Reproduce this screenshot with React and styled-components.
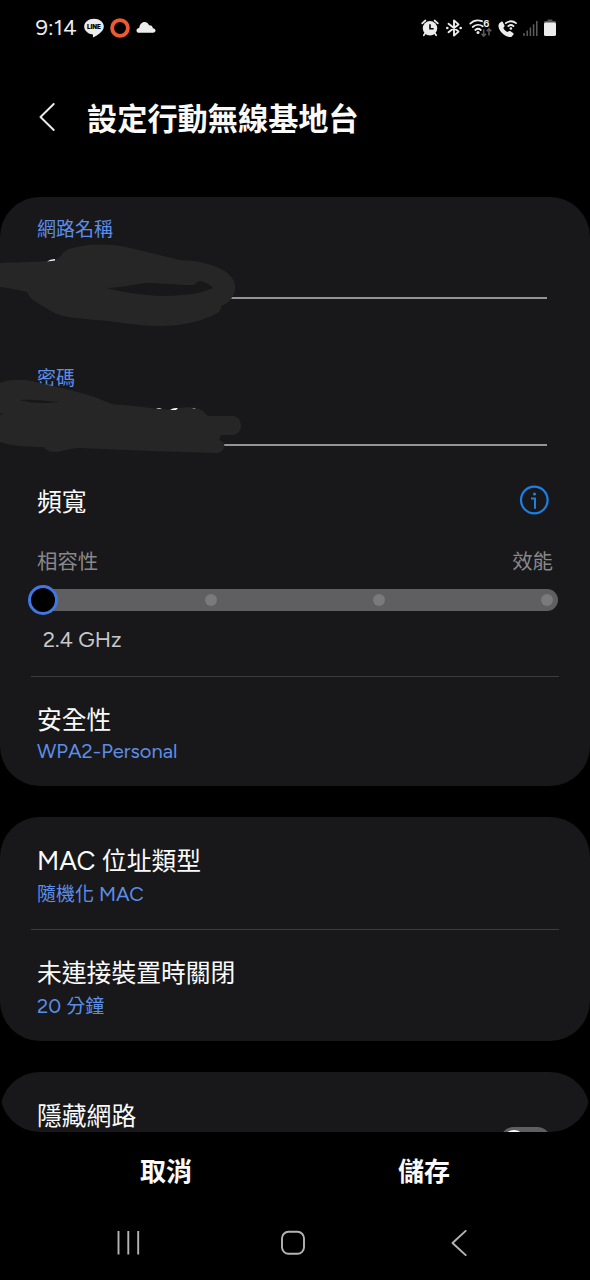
import React, { useState } from 'react';
import styled, { createGlobalStyle } from 'styled-components'

const theme = {
  black: '#000',
  card: '#18181a',
  white: '#fafafa',
  primary: '#5c8ee8',
  grey: '#88888a',
  scribble: '#262626',
}

const GlobalStyle = createGlobalStyle`
  * { box-sizing: border-box; }
  body {
    margin: 0;
    background-color: ${theme.black};
    font-family: Figtree, Inter, 'Noto Sans CJK TC', sans-serif;
    color: ${theme.white};
  }
  button {
    padding: 0;
    border: 0;
    background: none;
    color: inherit;
    font-family: inherit;
  }
  svg { display: block; }
`

const Screen = styled.div`
  display: flex;
  flex-direction: column;
  width: 590px;
  height: 1280px;
  overflow: hidden;
`

const StatusBar = styled.div`
  display: flex;
  align-items: center;
  height: 56px;
  padding: 0 34px 0 35.5px;
`

const Clock = styled.span`
  width: 48.5px;
  font-family: Figtree, Inter, sans-serif;
  font-size: 22px;
  line-height: 26px;
  letter-spacing: 0.1px;
  color: #ececec;
`

const StatusIcons = styled.div`
  display: flex;
  align-items: center;
  gap: ${({ $gap }) => $gap || 0}px;
  ${({ $end }) => $end && 'margin-left: auto;'}
`

const Header = styled.header`
  display: flex;
  align-items: center;
  height: 141px;
  padding: 0 36px 19px;
`

const BackButton = styled.button`
  width: 51px;
  height: 40px;
  padding-left: 3px;
`

const Title = styled.h1`
  margin: 0 0 1px;
  font-family: 'Noto Sans CJK TC', sans-serif;
  font-size: 30.2px;
  line-height: 44px;
  font-weight: 700;
`

const Content = styled.main`
  display: flex;
  flex-direction: column;
  gap: 31px;
  height: 935px;
  overflow: hidden;
  border-radius: 0 0 40px 40px;
`

const Card = styled.section`
  flex: none;
  height: ${({ $height }) => $height}px;
  border-radius: 40px;
  background-color: ${theme.card};
`

const Field = styled.div`
  position: relative;
  height: ${({ $height }) => $height}px;
  padding: ${({ $top }) => $top}px 43px 0 37px;
`

const Label = styled.div`
  font-size: 19px;
  line-height: 26px;
  color: ${theme.primary};
`

const Underline = styled.div`
  height: 2px;
  margin-top: ${({ $top }) => $top}px;
  background-color: #949496;
`

const Scribble = styled.svg`
  position: absolute;
  left: 0;
  top: ${({ $top }) => $top}px;
`

const Bandwidth = styled.div`
  height: 205px;
  padding: 14px 0 0;
`

const BandwidthHead = styled.div`
  display: flex;
  justify-content: space-between;
  align-items: flex-start;
  height: 36px;
  padding: 0 41px 0 37px;
`

const ItemTitle = styled.div`
  font-size: 24.8px;
  line-height: 34px;
  white-space: nowrap;
`

const Ends = styled.div`
  display: flex;
  justify-content: space-between;
  padding: 0 37px;
  margin-top: 27px;
  font-size: 20.4px;
  line-height: 28px;
  color: ${theme.grey};
`

const Track = styled.div`
  display: flex;
  justify-content: space-between;
  align-items: center;
  height: 22px;
  margin: 13px 32px 0;
  padding-right: 5px;
  border-radius: 11px;
  background-color: #5f5f62;
`

const Thumb = styled.button`
  width: 30px;
  height: 30px;
  margin: -1px -9px 0 -4px;
  border: 3px solid #3f78e4;
  border-radius: 50%;
  background-color: ${theme.black};
`

const Stop = styled.button`
  width: 12px;
  height: 12px;
  border-radius: 50%;
  background-color: #7a7a7d;
`

const SliderValue = styled.div`
  margin-top: 14px;
  padding-left: 43px;
  font-size: 21.6px;
  line-height: 28px;
  color: #c8c8ca;
`

const Divider = styled.div`
  height: 1px;
  margin: 0 31px;
  background-color: #3c3c3e;
`

const Item = styled.div`
  height: ${({ $height }) => $height}px;
  padding: ${({ $top }) => $top}px 37px 0;
`

const ItemValue = styled.div`
  margin-top: ${({ $top }) => $top || 0}px;
  font-size: 19px;
  line-height: 28px;
  color: ${theme.primary};
`

// latin letters run a little larger than the hanzi beside them
const Latin = styled.span`
  font-size: 1.06em;
  line-height: 1;
  white-space: pre;
`

const SwitchRow = styled.div`
  display: flex;
  justify-content: space-between;
  padding: 27px 39px 0 37px;
`

const Switch = styled.button`
  width: 51px;
  height: 28px;
  margin-top: 28px;
  padding: 3px;
  border-radius: 14px;
  background-color: #5f5f62;
`

const Knob = styled.span`
  display: block;
  width: 22px;
  height: 22px;
  border-radius: 50%;
  background-color: ${theme.white};
  ${({ $on }) => $on && 'margin-left: 23px;'}
`

const Actions = styled.div`
  display: flex;
  height: 74px;
  padding: 0 37px;
`

const Action = styled.button`
  flex: 1;
  height: 74px;
  font-family: 'Noto Sans CJK TC', sans-serif;
  font-size: 26px;
  font-weight: 700;
`

const NavBar = styled.nav`
  display: flex;
  align-items: center;
  height: 74px;
  padding: 0 0 0 116px;
`

const NavButton = styled.button`
  width: ${({ $width }) => $width}px;
`

const LineIcon = () => (
  <svg width="20" height="20" viewBox="0 0 20 20">
    <path d="M10 .7C4.700 .7 .2 4 .2 8.400c0 3.900 3.300 7.100 7.900 7.900 1 .2 1 .7.800 2.500 0 .5.300.7.800.4C12.500 17.500 19.800 13.600 19.800 8.400 19.800 4 15.300 .7 10 .7z" fill="#ececec" />
    <text x="10" y="11" textAnchor="middle" fontFamily="Inter, sans-serif" fontSize="6.200" fontWeight="900" fill="#000">LINE</text>
  </svg>
)

const RingIcon = () => (
  <svg width="20" height="20" viewBox="0 0 20 20">
    <circle cx="10" cy="10" r="7.900" fill="none" stroke="#ee5a30" strokeWidth="3.800" />
  </svg>
)

const CloudIcon = () => (
  <svg width="20" height="20" viewBox="0 0 20 20">
    <path d="M3.200 14.800C1.500 14.800.5 13.900.5 12.500s1-2.400 2.700-2.500C3.700 6.400 5.800 4 8.500 4c2.200 0 3.900 1.300 4.600 3.400 2.100-.3 3.500.9 3.800 2.900 1.600.2 2.600 1 2.600 2.300 0 1.400-.9 2.200-2.400 2.200z" fill="#ececec" />
  </svg>
)

const AlarmIcon = () => (
  <svg width="18" height="18" viewBox="0 0 18 18">
    <circle cx="9" cy="9.300" r="7.200" fill="#ececec" />
    <path d="M1.200 4.400 4.400 1.500M16.800 4.400 13.600 1.500M4 14.500 2.800 16.300M14 14.500l1.200 1.800" stroke="#ececec" strokeWidth="1.700" strokeLinecap="round" />
    <path d="M9 5.300V9.800h3.600" fill="none" stroke="#000" strokeWidth="1.600" />
  </svg>
)

const BluetoothIcon = () => (
  <svg width="18" height="18" viewBox="0 0 18 18">
    <path d="M3.500 4.800 13.500 12.600 9 16.600V1.400L13.500 5.400 3.500 13.200" fill="none" stroke="#ececec" strokeWidth="1.900" strokeLinejoin="round" strokeLinecap="round" />
    <circle cx="2.300" cy="9" r="1.300" fill="#ececec" />
    <circle cx="15.700" cy="9" r="1.300" fill="#ececec" />
  </svg>
)

const WifiIcon = () => (
  <svg width="24" height="20" viewBox="0 0 24 20">
    <g fill="none" stroke="#ececec" strokeWidth="1.800" strokeLinecap="round">
      <path d="M1.300 5.600C4.300 2.600 9 1.800 13 3.200" />
      <path d="M3.700 9c2.800-2.700 7-2.900 10-.8" />
      <path d="M6.300 12c1.600-1.400 3.900-1.400 5.500 0" />
    </g>
    <circle cx="9" cy="14.600" r="1.500" fill="#ececec" />
    <text x="14.200" y="8.800" fontFamily="Inter, sans-serif" fontSize="9.500" fontWeight="700" fill="#ececec">6</text>
    <path d="M14.700 11.500v6.500M12.500 15.800l2.200 2.400 2.200-2.400M20 17.500V11M17.700 13.200 20 10.800l2.300 2.400" fill="none" stroke="#5c5c5c" strokeWidth="1.500" />
  </svg>
)

const WifiCallIcon = () => (
  <svg width="19" height="19" viewBox="0 0 19 19">
    <path d="M3.200 2.800 1.300 4.200C-.5 6.200.6 10.700 4 14s7.900 4.900 9.900 3.400l1.500-1.800c.5-.6.400-1.300-.3-1.700l-2.900-1.800c-.6-.4-1.200-.2-1.600.2l-.7.8C8 12.500 6 10.500 5.300 8.900l.9-1.100c.4-.5.500-1 .2-1.600L4.900 3.200c-.4-.7-1.100-.8-1.700-.4z" fill="#ececec" />
    <path d="M7.800 4.200c2.900-2.600 7.300-2.600 10.200 0M10.300 7.100c1.600-1.400 3.600-1.400 5.200 0" fill="none" stroke="#ececec" strokeWidth="1.800" strokeLinecap="round" />
    <circle cx="12.900" cy="9.500" r="1.300" fill="#ececec" />
  </svg>
)

const SignalIcon = () => (
  <svg width="15" height="17" viewBox="0 0 15 17">
    <path d="M1 13v3M4.200 10.500v5.500M7.400 7.500v8.500M10.600 4.300v11.700M13.800 1v15" stroke="#5c5c5c" strokeWidth="1.500" />
  </svg>
)

const BatteryIcon = () => (
  <svg width="12" height="18" viewBox="0 0 12 18">
    <path d="M3.500 .5h5v1.500H11q1 0 1 1V5H0V3q0-1 1-1h2.500z" fill="#555" />
    <rect y="3.500" width="12" height="13.500" rx="1.600" fill="#ececec" />
  </svg>
)

const InfoIcon = () => (
  <svg width="30" height="30" viewBox="0 0 30 30">
    <circle cx="15.300" cy="15" r="13.300" fill="none" stroke="#1c7fe4" strokeWidth="2.200" />
    <circle cx="15.500" cy="9" r="1.600" fill="#1c7fe4" />
    <path d="M12 13.500h4v10.300" fill="none" stroke="#1c7fe4" strokeWidth="2" />
  </svg>
)

const Chevron = ({ width, height, stroke, strokeWidth }) => (
  <svg width={width} height={height} viewBox="0 0 16 28" preserveAspectRatio="none">
    <path d="M14.700 1 1.500 14l13.200 13" fill="none" stroke={stroke} strokeWidth={strokeWidth} strokeLinecap="round" strokeLinejoin="round" />
  </svg>
)

const RecentsIcon = () => (
  <svg width="25" height="26" viewBox="0 0 25 26">
    <path d="M2.500 1v23.500M12.300 1v23.500M22.200 1v23.500" stroke="#b4b4b4" strokeWidth="1.900" />
  </svg>
)

const HomeIcon = () => (
  <svg width="26" height="26" viewBox="0 0 26 26">
    <rect x="2" y="1.800" width="22" height="22" rx="6.500" fill="none" stroke="#b4b4b4" strokeWidth="1.900" />
  </svg>
)

const App = () => {
  const [hidden, setHidden] = useState(false)

  return (
    <>
      <GlobalStyle />
      <Screen>
        <StatusBar>
          <Clock>9:14</Clock>
          <StatusIcons $gap={6}>
            <LineIcon />
            <RingIcon />
            <CloudIcon />
          </StatusIcons>
          <StatusIcons $end $gap={5.8}>
            <AlarmIcon />
            <BluetoothIcon />
            <WifiIcon />
            <WifiCallIcon />
            <SignalIcon />
            <BatteryIcon />
          </StatusIcons>
        </StatusBar>
        <Header>
          <BackButton aria-label="back">
            <Chevron width={16} height={28} stroke="#ececec" strokeWidth={1.9} />
          </BackButton>
          <Title>設定行動無線基地台</Title>
        </Header>
        <Content>
          <Card $height={589}>
            <Field $height={144} $top={20}>
              <Label>網路名稱</Label>
              <Underline $top={54} />
              <Scribble $top={43} width="240" height="90" viewBox="0 240 240 90">
                <path
                  fillRule="evenodd"
                  fill={theme.scribble}
                  d="M0 263 L42 261.500C52 261 57 260 61 256C64 249 72 248 80 246.500C95 243.500 115 244 130 248L180 260C195 260.500 210 263 221 269C233 275 236 283 235 289C234 298 228 304 221 306C222 312 216 314 209 317C195 323 178 326 158 326C137 326 115 321 95 320C75 318 61 317 53 312L36 302C31 299 29 296 27 292C18 290 9 288 0 287zM107 288C120 288 135 284 145 283C160 283 178 285 192 285C197 285 196 281 200 281C206 282 210 285 213 288C200 294 184 296 160 296C143 295 120 292 107 288z"
                />
                <path d="M47 261.500q3-2.500 8-2.500v1.500z" fill={theme.white} />
              </Scribble>
            </Field>
            <Field $height={130} $top={25}>
              <Label>密碼</Label>
              <Underline $top={52} />
              <Scribble $top={34} width="245" height="80" viewBox="0 375 245 80">
                <path
                  fillRule="evenodd"
                  fill={theme.scribble}
                  d="M0 383C10 379 25 379 36 382C50 386 80 390 112 404C116 405 120 404.500 125 405L155 408.500L172 410C180 406.500 196 406 203 411L208 416H232C238 416 241 421 241 426C241 432 236 435.500 231 435H221L219 440C228 442 225 453 216 453L150 451L80 448C68 448 64 452 54 452C48 452 46 449 43 447C25 447 11 446 0 442zM20 400C29 399 47 401 59 402C45 404 29 403 20 400zM0 413 3 414 0 415z"
                />
                <path d="M156 409q3-1.500 6 0zM170 410q3-2.500 8-2l-2 2zM192 408.800q2-1.300 4 0z" fill={theme.white} />
              </Scribble>
            </Field>
            <Bandwidth>
              <BandwidthHead>
                <ItemTitle>頻寬</ItemTitle>
                <InfoIcon />
              </BandwidthHead>
              <Ends>
                <span>相容性</span>
                <span>效能</span>
              </Ends>
              <Track>
                <Thumb aria-label="2.4 GHz" />
                <Stop />
                <Stop />
                <Stop />
              </Track>
              <SliderValue>2.4 GHz</SliderValue>
            </Bandwidth>
            <Divider />
            <Item $height={109} $top={26}>
              <ItemTitle>安全性</ItemTitle>
              <ItemValue $top={1}><Latin>WPA2-Personal</Latin></ItemValue>
            </Item>
          </Card>
          <Card $height={224}>
            <Item $height={112} $top={27}>
              <ItemTitle><Latin>MAC </Latin>位址類型</ItemTitle>
              <ItemValue $top={3}>隨機化<Latin> MAC</Latin></ItemValue>
            </Item>
            <Divider />
            <Item $height={111} $top={26}>
              <ItemTitle>未連接裝置時關閉</ItemTitle>
              <ItemValue $top={3}><Latin>20 </Latin>分鐘</ItemValue>
            </Item>
          </Card>
          <Card $height={120}>
            <SwitchRow>
              <ItemTitle>隱藏網路</ItemTitle>
              <Switch role="switch" aria-checked={hidden} onClick={() => setHidden(state => !state)}>
                <Knob $on={hidden} />
              </Switch>
            </SwitchRow>
          </Card>
        </Content>
        <Actions>
          <Action>取消</Action>
          <Action>儲存</Action>
        </Actions>
        <NavBar>
          <NavButton $width={164} aria-label="recents"><RecentsIcon /></NavButton>
          <NavButton $width={171} aria-label="home"><HomeIcon /></NavButton>
          <NavButton $width={40} aria-label="back"><Chevron width={16} height={26} stroke="#b4b4b4" strokeWidth={1.9} /></NavButton>
        </NavBar>
      </Screen>
    </>
  )
}

export default App
